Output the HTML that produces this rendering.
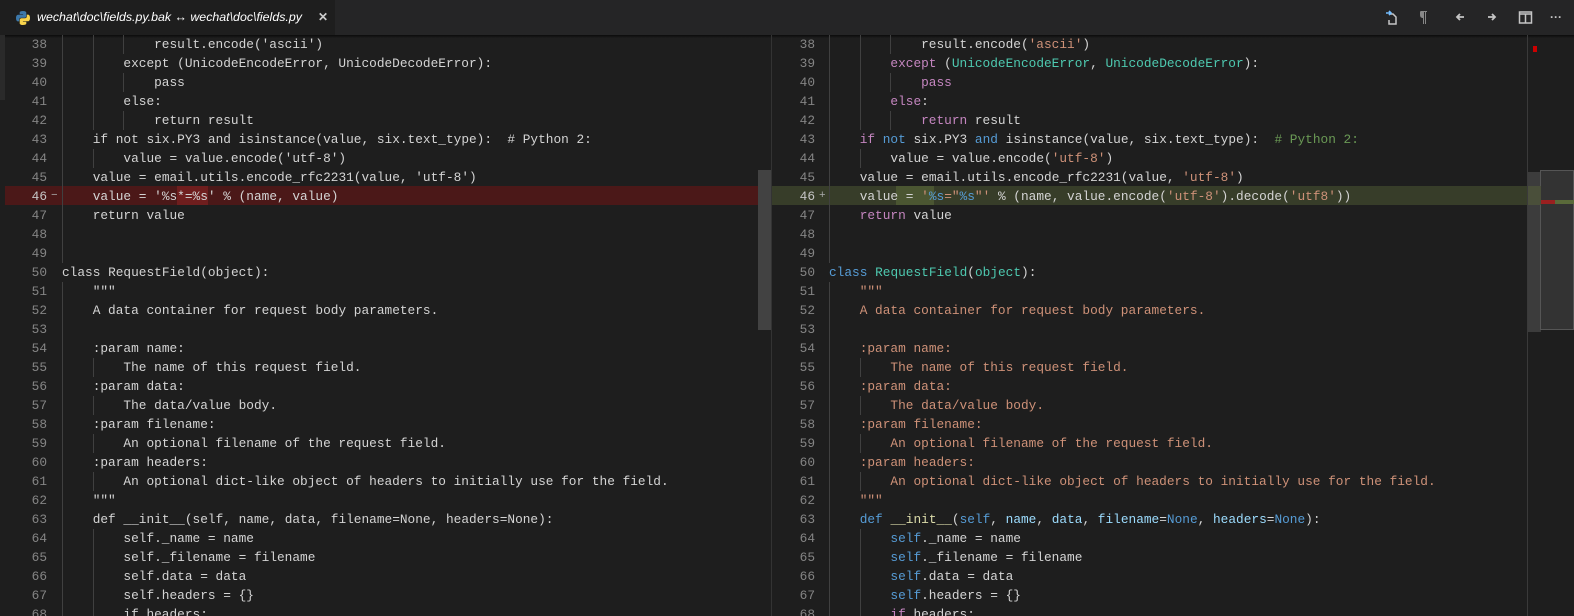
<!DOCTYPE html>
<html><head><meta charset="utf-8"><style>
body{margin:0;width:1574px;height:616px;background:#1e1e1e;overflow:hidden;position:relative;font-family:"Liberation Mono",monospace}
.tabbar{position:absolute;left:0;top:0;width:1574px;height:35px;background:#252526}
.tab{position:absolute;left:0;top:0;width:335px;height:35px;background:#1e1e1e;font-family:"Liberation Sans",sans-serif;font-style:italic;font-size:12.4px;color:#fff;line-height:35px}
.pane{position:absolute;top:35px;height:581px;overflow:hidden}
.ln{position:absolute;height:19px;line-height:19px;font-size:12.8px;white-space:pre;color:#d4d4d4}
.num{position:absolute;width:40px;text-align:right;color:#858585}
.k{color:#569cd6}.c{color:#c586c0}.s{color:#ce9178}.g{color:#6a9955}.t{color:#4ec9b0}.p{color:#9cdcfe}.y{color:#dcdcaa}
.ig{display:inline-block;width:4ch;box-shadow:inset 1px 0 #404040;height:19px;vertical-align:top}
</style></head><body>
<div class="tabbar">
<div class="tab">
<svg style="position:absolute;left:15px;top:10px" width="16" height="16" viewBox="0 0 16 16"><path d="M8 1C4.5 1 4.7 2.5 4.7 2.5V4.2H8.1V4.7H3.3S1 4.4 1 8s2 3.4 2 3.4h1.2V9.8S4.1 7.8 6.1 7.8H9.5S11.3 7.8 11.3 6V2.9S11.6 1 8 1z" fill="#3c78aa"/><path d="M8 15c3.5 0 3.3-1.5 3.3-1.5V11.8H7.9V11.3h4.8S15 11.6 15 8s-2-3.4-2-3.4H11.8V6.2S11.9 8.2 9.9 8.2H6.5S4.7 8.2 4.7 10v3.1S4.4 15 8 15z" fill="#f7d34b"/></svg>
<span style="position:absolute;left:37px">wechat\doc\fields.py.bak ↔ wechat\doc\fields.py</span>
<span style="position:absolute;left:318px;font-style:normal;font-weight:bold;color:#ccc;font-size:12px">✕</span>
</div>
<svg style="position:absolute;left:1385px;top:9px" width="150" height="18" viewBox="0 0 150 18">
<g fill="none" stroke="#c5c5c5" stroke-width="1.5"><path d="M4 5h4l3 3v7H4v-4"/></g>
<path d="M1 4h5M4 2l2 2-2 2" stroke="#75beff" stroke-width="1.6" fill="none"/>
<g fill="#888"><path d="M36 2h6v1h-1v12h-1V3h-1v12h-1V9c-2 0-3-1-3-3.5S35 2 36 2z"/></g>
<path d="M72 8h7M75 5l-3 3 3 3" stroke="#c5c5c5" stroke-width="1.8" fill="none"/>
<path d="M110 8h-7M107 5l3 3-3 3" stroke="#c5c5c5" stroke-width="1.8" fill="none"/>
<rect x="134.5" y="3" width="12" height="11" fill="none" stroke="#c5c5c5" stroke-width="1.5"/><path d="M134 5h13M140.5 5v9" stroke="#c5c5c5" stroke-width="1.5"/>
</svg>
<div style="position:absolute;left:1550px;top:10px;color:#c5c5c5;font-size:12px;font-family:'Liberation Sans',sans-serif;font-weight:bold">···</div>
</div>
<div style="position:absolute;left:0;top:35px;width:1574px;height:3px;background:linear-gradient(#000a,transparent)"></div>

<div class="pane" style="left:0;width:772px">
<div style="position:absolute;left:0;top:0;width:5px;height:65px;background:#2a2a2a"></div>
<div style="position:absolute;left:5px;top:151px;width:753px;height:19px;background:#4b1818"></div>
<div style="position:absolute;left:177px;top:151px;width:31px;height:19px;background:#6f1e1e"></div>
<div style="position:absolute;left:758px;top:135px;width:13px;height:160px;background:#424242"></div>
<div style="position:absolute;left:771px;top:0;width:1px;height:581px;background:#333"></div>
<div id="L"></div>
</div>
<div class="pane" style="left:772px;width:802px">
<div style="position:absolute;left:0;top:151px;width:755px;height:19px;background:#373d29"></div>
<div style="position:absolute;left:124px;top:151px;width:38px;height:19px;background:#4b5632"></div>
<div style="position:absolute;left:57px;top:151px;width:1px;height:19px;background:#aaa"></div>
<div id="R"></div>
<div style="position:absolute;left:755px;top:0;width:1px;height:581px;background:#3a3a3a"></div>
<div style="position:absolute;left:761px;top:11px;width:4px;height:6px;background:#c00"></div>
<div style="position:absolute;left:756px;top:137px;width:13px;height:160px;background:#3c3c3c"></div>
<div style="position:absolute;left:768px;top:135px;width:34px;height:160px;background:#333;border:1px solid #555;box-sizing:border-box"></div>
<div style="position:absolute;left:756px;top:165px;width:13px;height:2px;background:#888"></div>
<div style="position:absolute;left:769px;top:165px;width:14px;height:4px;background:#9a2020"></div>
<div style="position:absolute;left:783px;top:165px;width:19px;height:4px;background:#5a6a3a"></div>
<div style="position:absolute;left:756px;top:151px;width:13px;height:19px;background:#4a4f3a"></div>
</div>
<script>
const lines=[
[38,3,"result.encode(<s>'ascii'</s>)"],
[39,2,"<c>except</c> (<t>UnicodeEncodeError</t>, <t>UnicodeDecodeError</t>):"],
[40,3,"<c>pass</c>"],
[41,2,"<c>else</c>:"],
[42,3,"<c>return</c> result"],
[43,1,"<c>if</c> <k>not</k> six.PY3 <k>and</k> isinstance(value, six.text_type):  <g># Python 2:</g>"],
[44,2,"value = value.encode(<s>'utf-8'</s>)"],
[45,1,"value = email.utils.encode_rfc2231(value, <s>'utf-8'</s>)"],
[46,1,"L","value = <s>'%s*=%s'</s> % (name, value)","value = <s>'<k>%s</k>=\"<k>%s</k>\"'</s> % (name, value.encode(<s>'utf-8'</s>).decode(<s>'utf8'</s>))"],
[47,1,"<c>return</c> value"],
[48,1,""],[49,1,""],
[50,0,"<k>class</k> <t>RequestField</t>(<t>object</t>):"],
[51,1,"<s>\"\"\"</s>"],
[52,1,"<s>A data container for request body parameters.</s>"],
[53,1,""],
[54,1,"<s>:param name:</s>"],
[55,2,"<s>The name of this request field.</s>"],
[56,1,"<s>:param data:</s>"],
[57,2,"<s>The data/value body.</s>"],
[58,1,"<s>:param filename:</s>"],
[59,2,"<s>An optional filename of the request field.</s>"],
[60,1,"<s>:param headers:</s>"],
[61,2,"<s>An optional dict-like object of headers to initially use for the field.</s>"],
[62,1,"<s>\"\"\"</s>"],
[63,1,"<k>def</k> <y>__init__</y>(<k>self</k>, <p>name</p>, <p>data</p>, <p>filename</p>=<k>None</k>, <p>headers</p>=<k>None</k>):"],
[64,2,"<k>self</k>._name = name"],
[65,2,"<k>self</k>._filename = filename"],
[66,2,"<k>self</k>.data = data"],
[67,2,"<k>self</k>.headers = {}"],
[68,2,"<c>if</c> headers:"]];
function conv(s){return s.replace(/<(\w)>/g,'<span class="$1">').replace(/<\/\w>/g,'</span>');}
function strip(s){return s.replace(/<\/?\w>/g,'');}
function build(id,numR,mark,codeL,hl){
 let h='';
 lines.forEach((l,i)=>{
  let top=i*19, n=l[0], ind=l[1], txt=l[2];
  if(txt==="L") txt=hl?l[4]:l[3];
  let code=hl?conv(txt):strip(txt);
  let guides=''; for(let j=0;j<ind;j++) guides+='<span class="ig"></span>';
  let m=(n==46)?(hl?'+':'−'):'';
  h+=`<div class="ln" style="top:${top}px;left:0;width:760px"><span class="num" style="left:${numR-40}px;${n==46?'color:#c6c6c6':''}">${n}</span><span style="position:absolute;left:${mark}px;color:#aaa;font-size:11px">${m}</span><span style="position:absolute;left:${codeL}px">${guides}${code}</span></div>`;
 });
 document.getElementById(id).innerHTML=h;
}
build('L',47,51,62,false);
build('R',43,47,57,true);
</script>
</body></html>
